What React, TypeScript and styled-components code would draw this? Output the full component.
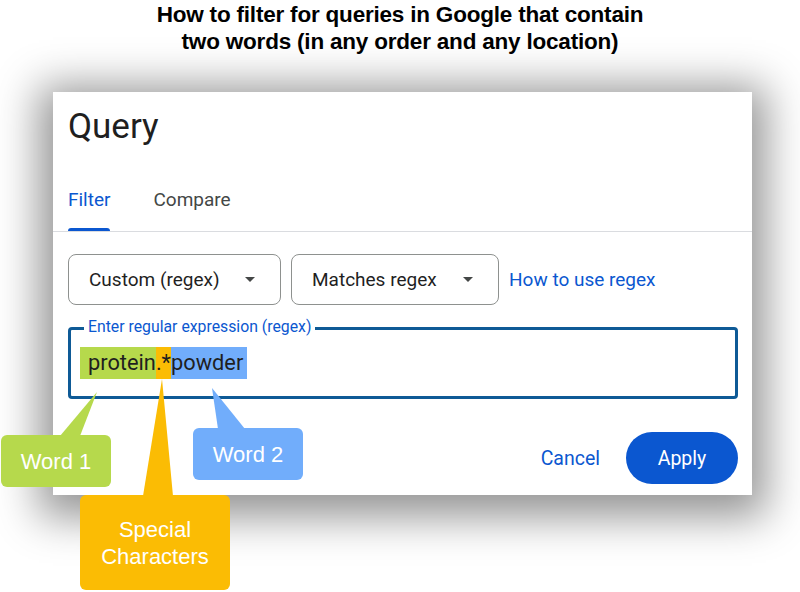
import React from "react";
import styled, { createGlobalStyle } from "styled-components";

const Global = createGlobalStyle`
  html, body { margin: 0; padding: 0; background: #ffffff; }
  body { font-family: Roboto, "Liberation Sans", Arial, sans-serif; }
`;

const Page = styled.div`
  position: relative;
  width: 800px;
  height: 592px;
  overflow: hidden;
  background: #ffffff;
`;

const Heading = styled.h1`
  margin: 0;
  padding-top: 1px;
  text-align: center;
  font-family: "Liberation Sans", Arial, sans-serif;
  font-weight: 700;
  font-size: 22.5px;
  line-height: 27px;
  color: #000000;
  letter-spacing: -0.2px;
`;

const Card = styled.div`
  margin: 37px 0 0 53px;
  width: 699px;
  height: 403px;
  box-sizing: border-box;
  background: #ffffff;
  box-shadow: 0 8px 40px 14px rgba(0, 0, 0, 0.42);
  display: flex;
  flex-direction: column;
`;

const Title = styled.div`
  padding: 13px 0 0 15px;
  font-family: Roboto, sans-serif;
  font-size: 35px;
  line-height: 44px;
  color: #1f1f1f;
`;

const Tabs = styled.div`
  margin-top: 40px;
  display: flex;
  gap: 43px;
  padding-left: 15px;
  border-bottom: 1px solid #dadce0;
`;

const Tab = styled.div<{ $active?: boolean }>`
  position: relative;
  font-family: Roboto, sans-serif;
  font-size: 19px;
  line-height: 22px;
  padding: 0 0 20px;
  color: ${(p) => (p.$active ? "#0b57d0" : "#444746")};
  &::after {
    content: "";
    display: ${(p) => (p.$active ? "block" : "none")};
    position: absolute;
    left: 0;
    right: 0;
    bottom: 0;
    height: 3px;
    border-radius: 3px 3px 0 0;
    background: #0b57d0;
  }
`;

const Body = styled.div`
  padding: 22px 14px 0 15px;
  display: flex;
  flex-direction: column;
`;

const Row = styled.div`
  display: flex;
  align-items: center;
  gap: 10px;
`;

const Select = styled.div<{ $w: number }>`
  width: ${(p) => p.$w}px;
  height: 51px;
  box-sizing: border-box;
  border: 1px solid #8e918f;
  border-radius: 8px;
  display: flex;
  align-items: center;
  justify-content: space-between;
  padding: 0 25px 0 20px;
  font-family: Roboto, sans-serif;
  font-size: 19px;
  color: #1f1f1f;
`;

const Caret = styled.span`
  width: 0;
  height: 0;
  border-left: 5px solid transparent;
  border-right: 5px solid transparent;
  border-top: 5px solid #444746;
`;

const Link = styled.a`
  font-family: Roboto, sans-serif;
  font-size: 19px;
  color: #0b57d0;
  text-decoration: none;
`;

const Field = styled.div`
  position: relative;
  margin-top: 22px;
  height: 72px;
  box-sizing: border-box;
  border: 3px solid #0e5a96;
  border-radius: 4px;
  display: flex;
  align-items: center;
  padding-left: 9px;
`;

const FieldLabel = styled.span`
  position: absolute;
  top: -12px;
  left: 13px;
  padding: 0 4px;
  background: #ffffff;
  font-family: Roboto, sans-serif;
  font-size: 15.8px;
  line-height: 18px;
  color: #0b57d0;
`;

const Mark = styled.span<{ $bg: string; $pl?: number; $pr?: number }>`
  display: inline-block;
  background: ${(p) => p.$bg};
  padding: 5px ${(p) => p.$pr ?? 0}px 5px ${(p) => p.$pl ?? 0}px;
  font-family: Roboto, sans-serif;
  font-size: 21.8px;
  line-height: 22px;
  color: #1f1f1f;
`;

const Actions = styled.div`
  margin-top: 33px;
  display: flex;
  align-items: center;
  justify-content: flex-end;
  gap: 26px;
`;

const TextButton = styled.button`
  border: none;
  background: none;
  padding: 0;
  font-family: Roboto, sans-serif;
  font-size: 19.5px;
  color: #0b57d0;
`;

const FilledButton = styled.button`
  width: 112px;
  height: 52px;
  border: none;
  border-radius: 26px;
  background: #0b57d0;
  color: #ffffff;
  font-family: Roboto, sans-serif;
  font-size: 19.5px;
`;

const Pointers = styled.svg`
  position: absolute;
  left: 0;
  top: 0;
  pointer-events: none;
`;

const Callout = styled.div<{ $bg: string; $x: number; $y: number; $w: number; $h: number }>`
  position: absolute;
  left: ${(p) => p.$x}px;
  top: ${(p) => p.$y}px;
  width: ${(p) => p.$w}px;
  height: ${(p) => p.$h}px;
  background: ${(p) => p.$bg};
  border-radius: 6px;
  display: flex;
  align-items: center;
  justify-content: center;
  text-align: center;
  font-family: "Liberation Sans", Arial, sans-serif;
  font-size: 22px;
  line-height: 27px;
  color: #ffffff;
`;

const GREEN = "#b6d94c";
const ORANGE = "#fbbc04";
const BLUE = "#71adfb";

export default function App() {
  return (
    <Page>
      <Global />
      <Heading>
        How to filter for queries in Google that contain
        <br />
        two words (in any order and any location)
      </Heading>
      <Card>
        <Title>Query</Title>
        <Tabs>
          <Tab $active>Filter</Tab>
          <Tab>Compare</Tab>
        </Tabs>
        <Body>
          <Row>
            <Select $w={213}>
              Custom (regex)
              <Caret />
            </Select>
            <Select $w={208}>
              Matches regex
              <Caret />
            </Select>
            <Link href="#">How to use regex</Link>
          </Row>
          <Field>
            <FieldLabel>Enter regular expression (regex)</FieldLabel>
            <Mark $bg={GREEN} $pl={8}>protein</Mark>
            <Mark $bg={ORANGE}>.*</Mark>
            <Mark $bg={BLUE} $pr={4}>powder</Mark>
          </Field>
          <Actions>
            <TextButton>Cancel</TextButton>
            <FilledButton>Apply</FilledButton>
          </Actions>
        </Body>
      </Card>
      <Pointers width="800" height="592" viewBox="0 0 800 592">
        <polygon points="97,392 60,436 80,436" fill={GREEN} />
        <polygon points="162,379 143,496 173,496" fill={ORANGE} />
        <polygon points="212,388 218,429 245,429" fill={BLUE} />
      </Pointers>
      <Callout $bg={GREEN} $x={1} $y={435} $w={110} $h={52}>Word 1</Callout>
      <Callout $bg={BLUE} $x={193} $y={428} $w={110} $h={52}>Word 2</Callout>
      <Callout $bg={ORANGE} $x={80} $y={495} $w={150} $h={95}>
        Special
        <br />
        Characters
      </Callout>
    </Page>
  );
}
